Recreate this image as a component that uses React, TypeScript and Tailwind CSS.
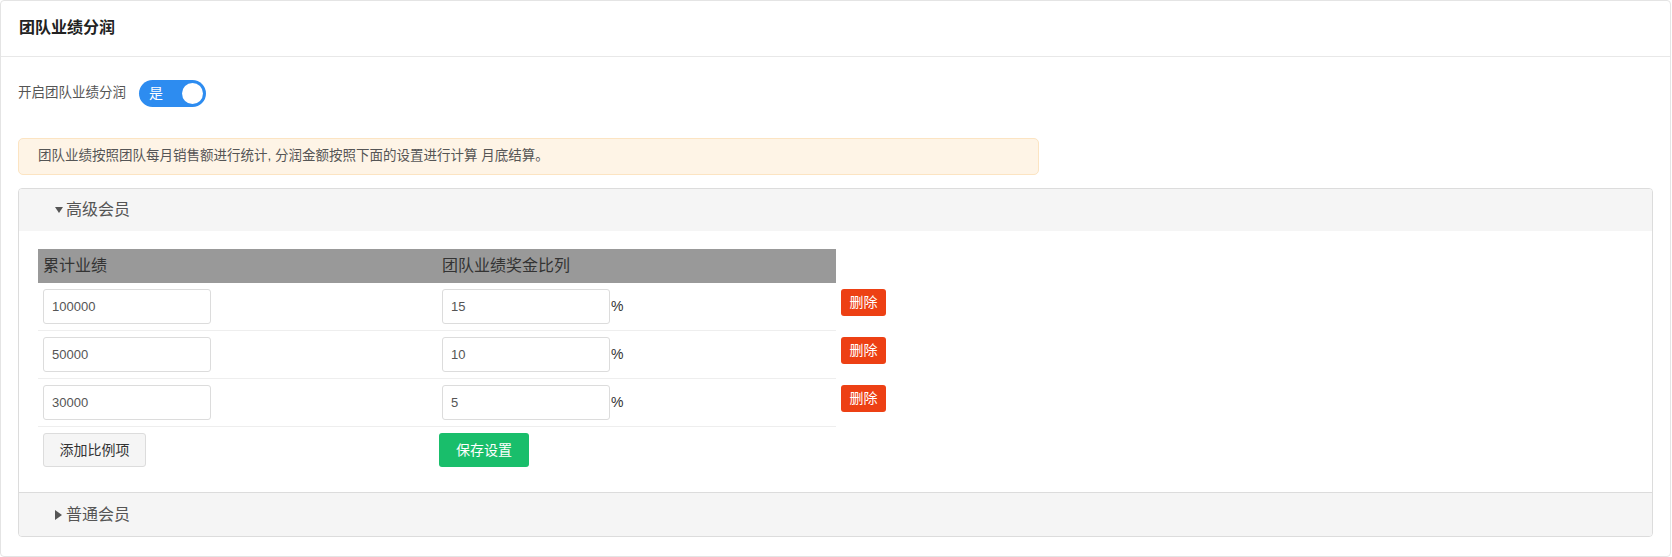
const rows = [
  { amount: '100000', rate: '15' },
  { amount: '50000', rate: '10' },
  { amount: '30000', rate: '5' },
];

function Toggle() {
  return (
    <div className="ml-[13px] flex h-[27px] w-[67px] items-center justify-between rounded-full bg-[#2d8cf0] pl-[10px] pr-[3px]">
      <span className="text-[14px] text-white">是</span>
      <span className="h-[21px] w-[21px] rounded-full bg-white"></span>
    </div>
  );
}

export default function App() {
  return (
    <div className="flex h-[557px] w-[1671px] flex-col rounded-[4px] border border-[#e4e4e4] bg-white font-['Liberation_Sans','Noto_Sans_CJK_SC',sans-serif]">
      {/* Card header */}
      <div className="flex h-[56px] items-center border-b border-[#e8e8e8] pb-[2px] pl-[18px] text-[16px] font-bold text-[#222]">
        团队业绩分润
      </div>

      <div className="px-[17px] pt-[23px]">
        {/* Switch */}
        <div className="flex h-[27px] items-center">
          <span className="text-[13.5px] text-[#555]">开启团队业绩分润</span>
          <Toggle />
        </div>

        {/* Notice */}
        <div className="mt-[31px] flex h-[37px] w-[1021px] items-center rounded-[5px] border border-[#fce4c2] bg-[#fef4e6] pl-[19px] text-[13.5px] text-[#555]">
          团队业绩按照团队每月销售额进行统计, 分润金额按照下面的设置进行计算 月底结算。
        </div>

        {/* Collapse panel */}
        <div className="mt-[13px] overflow-hidden rounded-[4px] border border-[#dcdcdc]">
          <div className="flex h-[42px] items-center bg-[#f5f5f5] pl-[36px] text-[16px] text-[#555]">
            <span className="mr-[3px] h-0 w-0 border-x-[4px] border-t-[6px] border-x-transparent border-t-[#555]"></span>
            高级会员
          </div>

          <div className="pb-[25px] pl-[19px] pt-[18px]">
            {/* Table head */}
            <div className="flex h-[34px] w-[798px] items-center bg-[#999] text-[16px] text-[#333]">
              <div className="w-[399px] pl-[5px]">累计业绩</div>
              <div className="pl-[5px]">团队业绩奖金比列</div>
            </div>

            {rows.map((row, i) => (
              <div key={i} className="flex items-start">
                <div className="flex w-[798px] items-center border-b border-[#eee] py-[6px]">
                  <div className="w-[399px] pl-[5px]">
                    <input
                      defaultValue={row.amount}
                      className="h-[35px] w-[168px] rounded-[3px] border border-[#dcdcdc] px-[8px] text-[13px] text-[#555] outline-none"
                    />
                  </div>
                  <div className="flex items-center pl-[5px]">
                    <input
                      defaultValue={row.rate}
                      className="h-[35px] w-[168px] rounded-[3px] border border-[#dcdcdc] px-[8px] text-[13px] text-[#555] outline-none"
                    />
                    <span className="ml-[1px] text-[14px] text-[#333]">%</span>
                  </div>
                </div>
                <button className="ml-[5px] mt-[6px] h-[27px] w-[45px] rounded-[3px] bg-[#ed4014] text-[14px] text-white">
                  删除
                </button>
              </div>
            ))}

            {/* Actions */}
            <div className="flex w-[798px] pt-[6px]">
              <div className="w-[399px] pl-[5px]">
                <button className="h-[34px] w-[103px] rounded-[3px] border border-[#dcdcdc] bg-[#f5f5f5] text-[14px] text-[#333]">
                  添加比例项
                </button>
              </div>
              <div className="pl-[2px]">
                <button className="h-[34px] w-[90px] rounded-[3px] bg-[#19be6b] text-[14px] text-white">
                  保存设置
                </button>
              </div>
            </div>
          </div>

          <div className="flex h-[44px] items-center border-t border-[#dcdcdc] bg-[#f5f5f5] pl-[36px] text-[16px] text-[#555]">
            <span className="mr-[4px] h-0 w-0 border-y-[5px] border-l-[7px] border-y-transparent border-l-[#555]"></span>
            普通会员
          </div>
        </div>
      </div>
    </div>
  );
}
